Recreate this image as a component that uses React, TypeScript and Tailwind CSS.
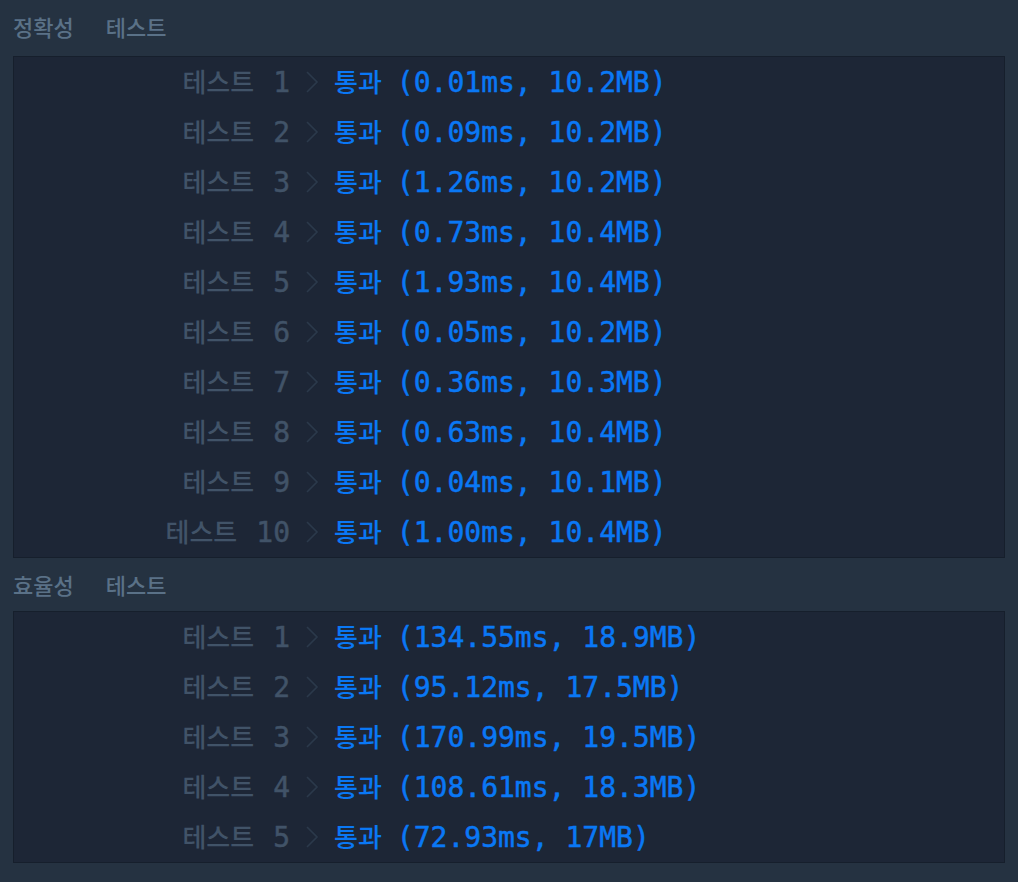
const ACCURACY = [
  { no: 1, time: "0.01ms", mem: "10.2MB" },
  { no: 2, time: "0.09ms", mem: "10.2MB" },
  { no: 3, time: "1.26ms", mem: "10.2MB" },
  { no: 4, time: "0.73ms", mem: "10.4MB" },
  { no: 5, time: "1.93ms", mem: "10.4MB" },
  { no: 6, time: "0.05ms", mem: "10.2MB" },
  { no: 7, time: "0.36ms", mem: "10.3MB" },
  { no: 8, time: "0.63ms", mem: "10.4MB" },
  { no: 9, time: "0.04ms", mem: "10.1MB" },
  { no: 10, time: "1.00ms", mem: "10.4MB" },
];

const EFFICIENCY = [
  { no: 1, time: "134.55ms", mem: "18.9MB" },
  { no: 2, time: "95.12ms", mem: "17.5MB" },
  { no: 3, time: "170.99ms", mem: "19.5MB" },
  { no: 4, time: "108.61ms", mem: "18.3MB" },
  { no: 5, time: "72.93ms", mem: "17MB" },
];

const KO = "font-['Noto_Sans_CJK_KR',sans-serif]";
const MONO = "font-['DejaVu_Sans_Mono','Liberation_Mono',monospace] [-webkit-text-stroke:0.5px_currentColor]";

function Chevron() {
  return (
    <svg width="14" height="24" viewBox="0 0 14 24" className="ml-[15px] mr-[15px] shrink-0 self-center">
      <path d="M2 2 L12 12 L2 22" fill="none" stroke="#2b394b" strokeWidth="1.6" />
    </svg>
  );
}

function ResultRow({ no, time, mem }: { no: number; time: string; mem: string }) {
  return (
    <div className="flex h-[50px] items-center">
      <div className="flex w-[276px] shrink-0 items-baseline justify-end text-[#415368]">
        <span className={`${KO} text-[26px] font-medium`}>테스트</span>
        <span className={`${MONO} ml-[19px] text-[28px]`}>{no}</span>
      </div>
      <Chevron />
      <div className="flex items-baseline text-[#0a78f5]">
        <span className={`${KO} text-[26px] font-medium`}>통과</span>
        <span className={`${MONO} ml-[15px] text-[28px]`}>
          ({time}, {mem})
        </span>
      </div>
    </div>
  );
}

function SectionTitle({ first, className }: { first: string; className: string }) {
  return (
    <div className={`flex items-center px-[13px] text-[22px] font-medium text-[#5a7187] ${KO} ${className}`}>
      <span>{first}</span>
      <span className="ml-[32px]">테스트</span>
    </div>
  );
}

export default function App() {
  return (
    <div className="min-h-screen w-full bg-[#253241] pb-[16px]">
      <SectionTitle first="정확성" className="h-[56px] pb-[4px]" />
      <div className="mx-[13px] border border-[#161f2c] bg-[#1d2636]">
        {ACCURACY.map((r) => (
          <ResultRow key={r.no} {...r} />
        ))}
      </div>
      <SectionTitle first="효율성" className="h-[53px]" />
      <div className="mx-[13px] border border-[#161f2c] bg-[#1d2636]">
        {EFFICIENCY.map((r) => (
          <ResultRow key={r.no} {...r} />
        ))}
      </div>
    </div>
  );
}
